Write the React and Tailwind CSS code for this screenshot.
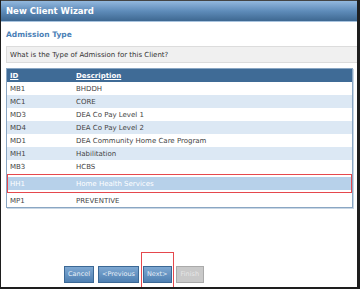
import React from "react";

const rows = [
    { id: "MB1", desc: "BHDDH" },
    { id: "MC1", desc: "CORE" },
    { id: "MD3", desc: "DEA Co Pay Level 1" },
    { id: "MD4", desc: "DEA Co Pay Level 2" },
    { id: "MD1", desc: "DEA Community Home Care Program" },
    { id: "MH1", desc: "Habilitation" },
    { id: "MB3", desc: "HCBS" },
    { id: "HH1", desc: "Home Health Services", selected: true },
    { id: "MP1", desc: "PREVENTIVE" },
];

export default function App() {
    return (
        <div className="w-[360px] h-[289px] overflow-hidden bg-white border-l border-r-[3px] border-b-2 border-[#1e1e1e] flex flex-col font-['DejaVu_Sans',sans-serif]">
            {/* Title bar */}
            <div className="h-[22px] shrink-0 border-t border-[#444] bg-gradient-to-b from-[#93b8de] via-[#5f8cba] to-[#3e6891] flex items-center pl-[5px] border-b border-b-[#a9c4df]">
                <span className="text-white font-bold text-[8.5px]">New Client Wizard</span>
            </div>

            <div className="flex-1 flex flex-col pl-[5px]">
                <div className="mt-[7px] text-[7.5px] font-bold text-[#4b7fb6]">Admission Type</div>

                {/* Question box */}
                <div className="mt-[6px] h-[17px] bg-[#f0f0f0] border-t border-b border-l border-[#dcdcdc] flex items-center pl-[3px] text-[7px] text-[#333]">
                    What is the Type of Admission for this Client?
                </div>

                {/* Table */}
                <div className="mt-[5px] w-[347px] border border-[#8aa6c3] shadow-[1px_1px_0_#c9d7e5]">
                    <div className="h-[13px] bg-[#3f6b96] flex items-center text-white font-bold text-[7px] underline">
                        <span className="w-[69px] pl-[3px]">ID</span>
                        <span>Description</span>
                    </div>
                    {rows.map((r, i) => (
                        <div
                            key={r.id}
                            className={r.selected ? "my-[1px] border border-[#e5484d] py-[2px] bg-white" : ""}
                        >
                            <div
                                className={`h-[13px] flex items-center text-[7px] ${r.selected
                                    ? "bg-[#b7d1ea] text-white"
                                    : i % 2 === 0
                                        ? "bg-white text-[#444]"
                                        : "bg-[#dce8f4] text-[#444]"
                                    }`}
                            >
                                <span className={r.selected ? "w-[68px] pl-[2px]" : "w-[69px] pl-[3px]"}>{r.id}</span>
                                <span>{r.desc}</span>
                            </div>
                        </div>
                    ))}
                </div>

                <div className="flex-1" />

                {/* Buttons */}
                <div className="flex items-end gap-[4px] pl-[58px] mb-[4px]">
                    <button className="h-[17px] px-[3px] bg-gradient-to-b from-[#7ea8d2] to-[#4f80b2] border border-[#3b6895] text-[#e8f0f8] text-[6.5px]">Cancel</button>
                    <button className="h-[17px] px-[3px] bg-gradient-to-b from-[#7ea8d2] to-[#4f80b2] border border-[#3b6895] text-[#e8f0f8] text-[6.5px]">&lt;Previous</button>
                    <div className="relative">
                        <button className="h-[17px] px-[3px] bg-gradient-to-b from-[#7ea8d2] to-[#4f80b2] border border-[#3b6895] text-[#e8f0f8] text-[6.5px]">Next&gt;</button>
                        <div className="absolute left-[-2px] right-[-2px] top-[-7px] h-[40px] border border-[#e5484d]" />
                    </div>
                    <button className="h-[17px] px-[4px] bg-[#c9c9c9] border border-[#aaa] text-[#e6e6e6] text-[6.5px]">Finish</button>
                </div>
            </div>
        </div>
    );
}
